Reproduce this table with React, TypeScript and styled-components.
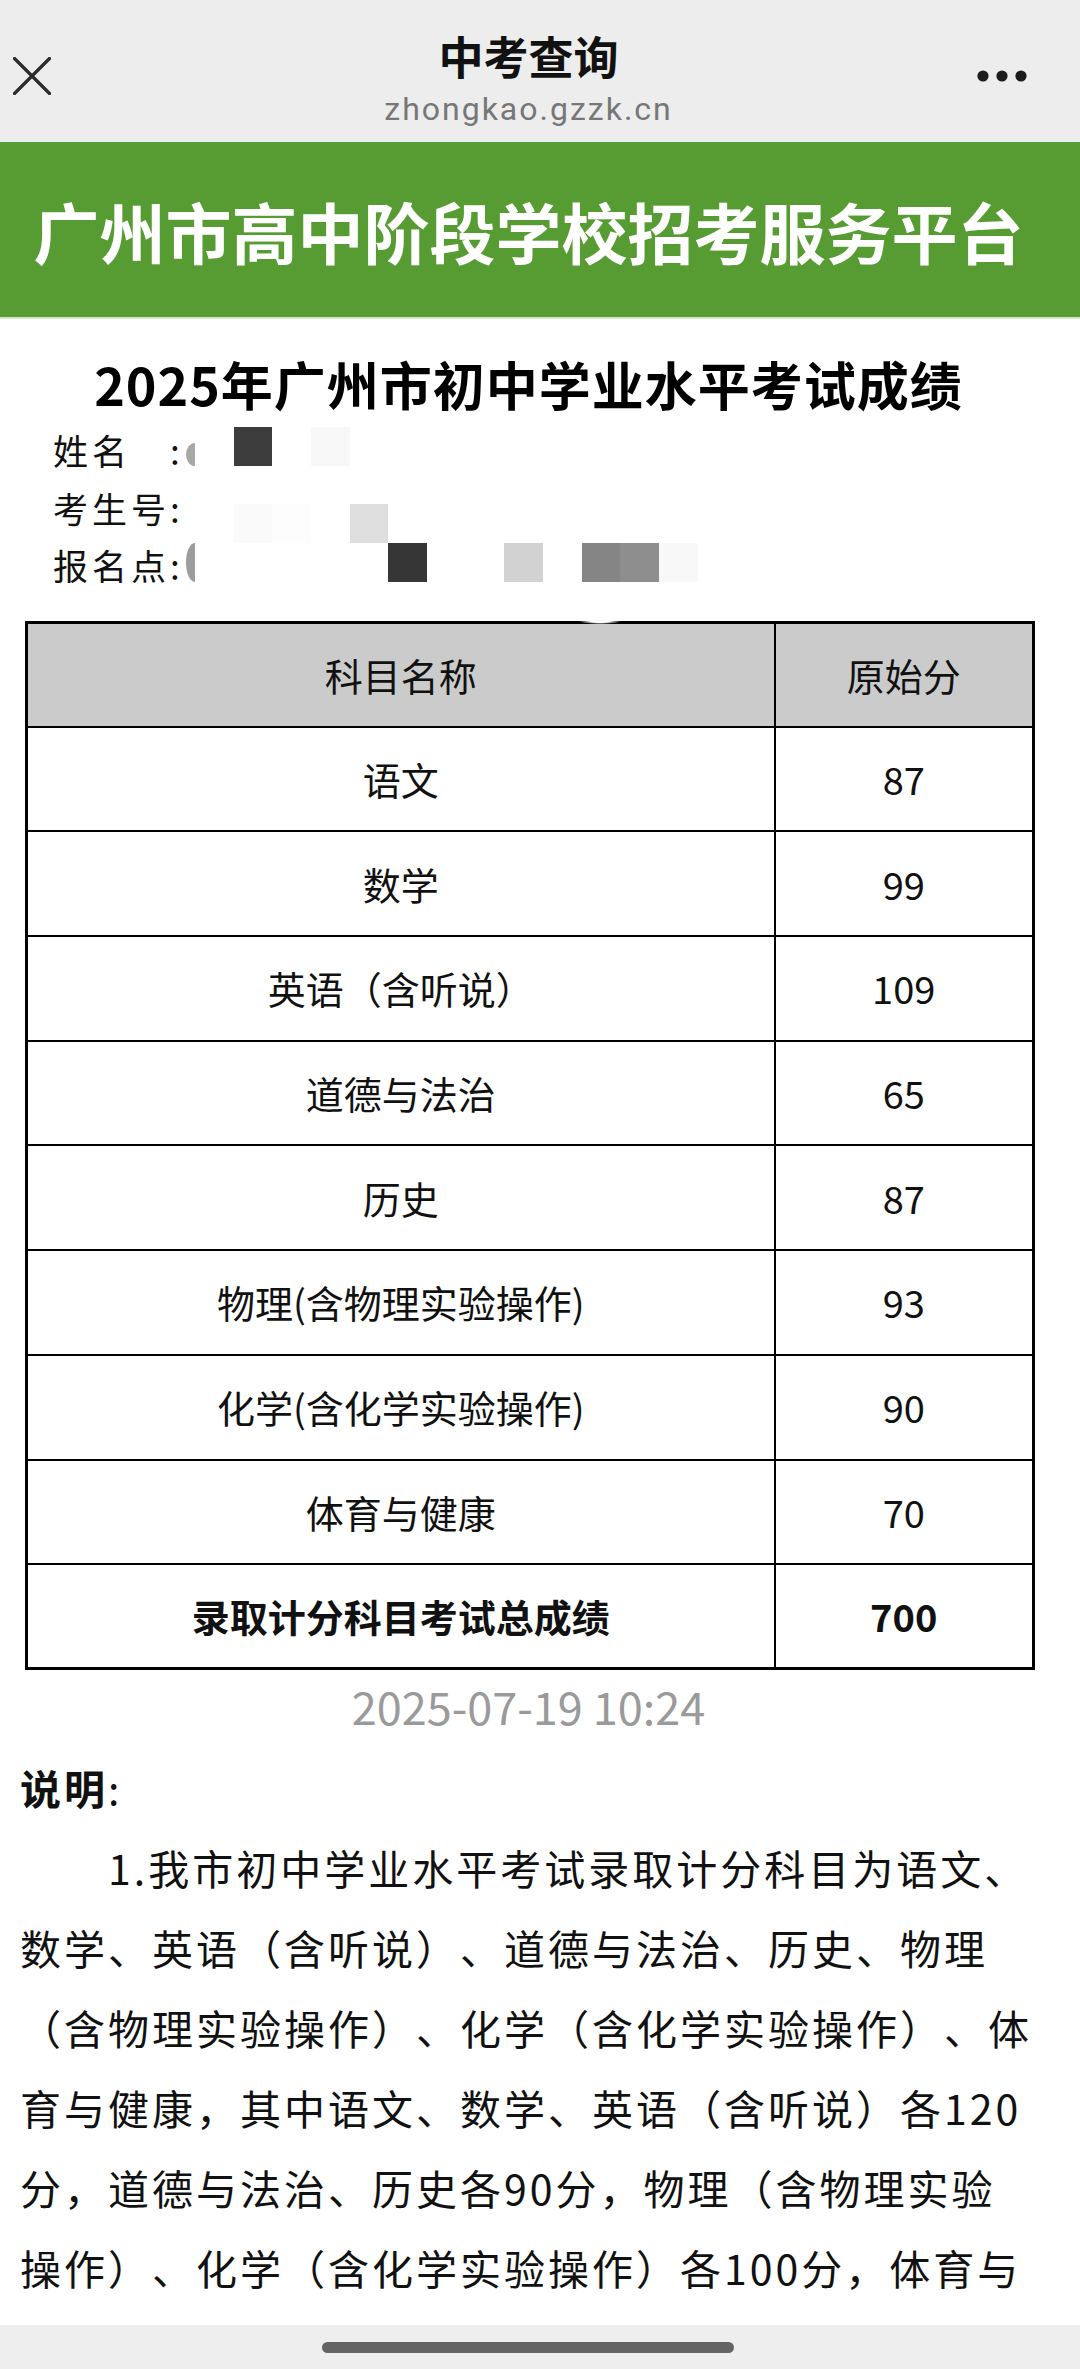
import React from "react";
import styled, { createGlobalStyle } from "styled-components";

const GlobalStyle = createGlobalStyle`
  html, body { margin: 0; padding: 0; background: #ffffff; }
  body {
    font-family: "Noto Sans CJK SC", "Noto Sans", sans-serif;
    color: #111111;
    text-spacing-trim: space-all;
  }
  * { box-sizing: border-box; }
`;

const Page = styled.div`
  width: 1080px;
  min-height: 2369px;
  background: #ffffff;
  padding-bottom: 160px;
`;

/* ---------- top navigation bar ---------- */
const TopBar = styled.header`
  height: 142px;
  background: #ededed;
  display: grid;
  grid-template-columns: 1fr auto 1fr;
  align-items: center;
  padding: 10px 23px 0 0;
`;

const Side = styled.div<{ $end?: boolean }>`
  display: flex;
  justify-content: ${(p) => (p.$end ? "flex-end" : "flex-start")};
  padding: ${(p) => (p.$end ? "0 29px 0 0" : "0 0 0 13px")};
`;

const TitleBlock = styled.div`
  align-self: start;
  padding-top: 20px;
  display: flex;
  flex-direction: column;
  align-items: center;
`;

const Title = styled.div`
  font-size: 45px;
  font-weight: 700;
  line-height: 52px;
  color: #111111;
`;

const Url = styled.div`
  margin-top: 7px;
  font-family: Roboto, "Noto Sans", sans-serif;
  font-size: 32px;
  line-height: 40px;
  letter-spacing: 2px;
  color: #777777;
`;

/* ---------- green banner ---------- */
const Banner = styled.div`
  height: 177px;
  background: #569c33;
  border-bottom: 2px solid #cfe7c2;
  display: flex;
  align-items: center;
  justify-content: center;
  padding-right: 23px;
  color: #ffffff;
  font-size: 66px;
  font-weight: 700;
  white-space: nowrap;
`;

/* ---------- heading & info ---------- */
const Heading = styled.h1`
  margin: 35px 0 0;
  padding-right: 23px;
  text-align: center;
  font-size: 52px;
  font-weight: 700;
  line-height: 60px;
  letter-spacing: 1px;
  color: #000000;
`;

const InfoSection = styled.section`
  position: relative;
  margin-top: 7px;
  padding-left: 53px;
`;

const InfoRow = styled.div`
  display: flex;
  font-size: 35px;
  letter-spacing: 4px;
  line-height: 57.5px;
  color: #111111;
`;

const Label = styled.span`
  width: 117px;
  white-space: nowrap;
`;

const Colon = styled.span``;

const Mosaic = styled.div`
  position: absolute;
  left: 233.5px;
  top: 6px;
  display: grid;
  grid-template-columns: repeat(12, 38.7px);
  grid-template-rows: repeat(4, 38.7px);
  pointer-events: none;
`;

const MosaicCell = styled.div<{ $c: number; $r: number; $color: string }>`
  grid-column: ${(p) => p.$c + 1};
  grid-row: ${(p) => p.$r + 1};
  background: ${(p) => p.$color};
`;

const Sliver = styled.div<{ $top: number; $h: number; $color: string }>`
  position: absolute;
  left: 186px;
  top: ${(p) => p.$top}px;
  width: 9px;
  height: ${(p) => p.$h}px;
  background: ${(p) => p.$color};
  border-radius: 100% 0 0 100% / 50% 0 0 50%;
`;

/* ---------- score table ---------- */
const TableWrap = styled.div`
  position: relative;
  width: 1007px;
  margin: 27px 0 0 25px;
`;

const Glint = styled.div`
  position: absolute;
  left: 555px;
  top: -2px;
  width: 40px;
  height: 5px;
  border-radius: 50%;
  background: radial-gradient(ellipse at center, #ffffff 30%, rgba(255,255,255,0) 75%);
`;

const ScoreTable = styled.table`
  width: 1007px;
  border-collapse: collapse;
  table-layout: fixed;
  border: 3px solid #000000;
`;

const Col = styled.col<{ $w: number }>`
  width: ${(p) => p.$w}px;
`;

const Row = styled.tr`
  height: 104.7px;
`;

const Cell = styled.td<{ $head?: boolean; $bold?: boolean }>`
  border: 2px solid #000000;
  padding: 0;
  text-align: center;
  vertical-align: middle;
  font-size: 38px;
  line-height: 48px;
  color: #111111;
  background: ${(p) => (p.$head ? "#cbcbcb" : "#ffffff")};
  font-weight: ${(p) => (p.$bold ? 700 : 400)};
`;

const DateLine = styled.div`
  margin-top: 8px;
  padding-right: 23px;
  text-align: center;
  font-size: 45px;
  line-height: 56px;
  color: #9a9a9a;
`;

/* ---------- notes ---------- */
const Notes = styled.section`
  padding: 13px 45px 0 20px;
  font-size: 41px;
  letter-spacing: 3px;
  line-height: 80px;
  color: #111111;
`;

const NoteTitle = styled.div`
  font-weight: 700;
`;

const NoteColon = styled.span`
  font-weight: 400;
`;

const NotePara = styled.p`
  margin: 0;
  text-indent: 88px;
`;

/* ---------- bottom home bar ---------- */
const HomeBar = styled.div`
  position: fixed;
  left: 0;
  right: 0;
  bottom: 0;
  height: 44px;
  background: #eeeeee;
  display: flex;
  align-items: flex-start;
  padding: 17px 0 0 322px;
`;

const HomePill = styled.div`
  width: 412px;
  height: 11px;
  border-radius: 6px;
  background: #646464;
`;

const CloseIcon = () => (
  <svg width="38" height="38" viewBox="0 0 38 38" fill="none">
    <path d="M1.5 1.5 L36.5 36.5 M36.5 1.5 L1.5 36.5" stroke="#2b2b2b" strokeWidth="3.2" strokeLinecap="round" />
  </svg>
);

const MoreIcon = () => (
  <svg width="52" height="14" viewBox="0 0 52 14">
    <circle cx="7" cy="7" r="5.6" fill="#1c1c1c" />
    <circle cx="26" cy="7" r="5.6" fill="#1c1c1c" />
    <circle cx="45" cy="7" r="5.6" fill="#1c1c1c" />
  </svg>
);

const subjects: [string, string][] = [
  ["语文", "87"],
  ["数学", "99"],
  ["英语（含听说）", "109"],
  ["道德与法治", "65"],
  ["历史", "87"],
  ["物理(含物理实验操作)", "93"],
  ["化学(含化学实验操作)", "90"],
  ["体育与健康", "70"],
];

const mosaic: [number, number, string][] = [
  [0, 0, "#3c3c3c"],
  [2, 0, "#f8f8f8"],
  [0, 2, "#fafafa"],
  [1, 2, "#fdfdfd"],
  [3, 2, "#dedede"],
  [4, 3, "#363636"],
  [7, 3, "#d2d2d2"],
  [9, 3, "#858585"],
  [10, 3, "#8e8e8e"],
  [11, 3, "#f8f8f8"],
];

const note =
  "1.我市初中学业水平考试录取计分科目为语文、数学、英语（含听说）、道德与法治、历史、物理（含物理实验操作）、化学（含化学实验操作）、体育与健康，其中语文、数学、英语（含听说）各120分，道德与法治、历史各90分，物理（含物理实验操作）、化学（含化学实验操作）各100分，体育与健康70分，总分810分。";

export default function App() {
  return (
    <Page>
      <GlobalStyle />
      <TopBar>
        <Side>
          <CloseIcon />
        </Side>
        <TitleBlock>
          <Title>中考查询</Title>
          <Url>zhongkao.gzzk.cn</Url>
        </TitleBlock>
        <Side $end>
          <MoreIcon />
        </Side>
      </TopBar>

      <Banner>广州市高中阶段学校招考服务平台</Banner>

      <Heading>2025年广州市初中学业水平考试成绩</Heading>

      <InfoSection>
        <InfoRow>
          <Label>姓名</Label>
          <Colon>:</Colon>
        </InfoRow>
        <InfoRow>
          <Label>考生号</Label>
          <Colon>:</Colon>
        </InfoRow>
        <InfoRow>
          <Label>报名点</Label>
          <Colon>:</Colon>
        </InfoRow>
        <Sliver $top={22} $h={23} $color="#a8a8a8" />
        <Sliver $top={122} $h={39} $color="#9c9c9c" />
        <Mosaic>
          {mosaic.map(([c, r, color], i) => (
            <MosaicCell key={i} $c={c} $r={r} $color={color} />
          ))}
        </Mosaic>
      </InfoSection>

      <TableWrap>
        <ScoreTable>
          <colgroup>
            <Col $w={748} />
            <Col $w={259} />
          </colgroup>
          <tbody>
            <Row>
              <Cell $head>科目名称</Cell>
              <Cell $head>原始分</Cell>
            </Row>
            {subjects.map(([name, score]) => (
              <Row key={name}>
                <Cell>{name}</Cell>
                <Cell>{score}</Cell>
              </Row>
            ))}
            <Row>
              <Cell $bold>录取计分科目考试总成绩</Cell>
              <Cell $bold>700</Cell>
            </Row>
          </tbody>
        </ScoreTable>
        <Glint />
      </TableWrap>

      <DateLine>2025-07-19 10:24</DateLine>

      <Notes>
        <NoteTitle>
          说明<NoteColon>:</NoteColon>
        </NoteTitle>
        <NotePara>{note}</NotePara>
      </Notes>

      <HomeBar>
        <HomePill />
      </HomeBar>
    </Page>
  );
}
